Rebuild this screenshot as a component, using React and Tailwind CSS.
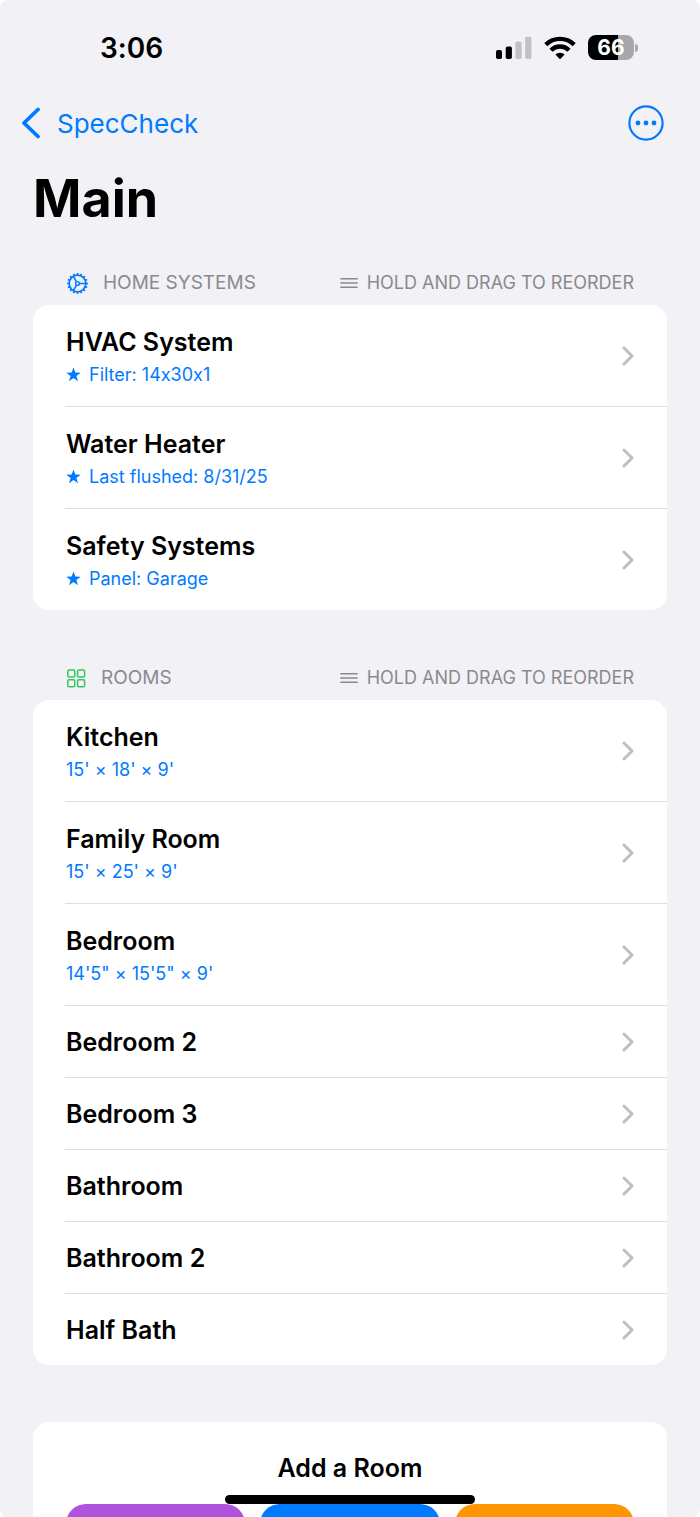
const systems = [
  { name: 'HVAC System', detail: 'Filter: 14x30x1' },
  { name: 'Water Heater', detail: 'Last flushed: 8/31/25' },
  { name: 'Safety Systems', detail: 'Panel: Garage' },
];

const rooms = [
  { name: 'Kitchen', detail: "15' × 18' × 9'" },
  { name: 'Family Room', detail: "15' × 25' × 9'" },
  { name: 'Bedroom', detail: `14'5" × 15'5" × 9'` },
  { name: 'Bedroom 2' },
  { name: 'Bedroom 3' },
  { name: 'Bathroom' },
  { name: 'Bathroom 2' },
  { name: 'Half Bath' },
];

const gearTeeth = Array.from({ length: 16 }, (_, i) => i * 22.5);

const SignalIcon = () => (
  <svg width="36" height="24" viewBox="0 0 36 24" aria-hidden="true">
    <rect x="0" y="14" width="6" height="9" rx="1.8" />
    <rect x="9.7" y="10.5" width="6.2" height="12.5" rx="1.8" />
    <rect x="19.4" y="5.5" width="6.2" height="17.5" rx="1.8" fill="#c1c0c5" />
    <rect x="29.2" y="0.7" width="6.2" height="22.3" rx="1.8" fill="#c1c0c5" />
  </svg>
);

const WifiIcon = () => (
  <svg width="32" height="24" viewBox="0 0 32 24" fill="none" stroke="#000" strokeWidth="4.4" aria-hidden="true">
    <path d="M1.8 8.6 A20.4 20.4 0 0 1 30.2 8.6" />
    <path d="M7 14.2 A12.8 12.8 0 0 1 25 14.2" />
    <path d="M11.4 18.5 A6.6 6.6 0 0 1 20.6 18.5 L16.6 22.7 Q16 23.2 15.4 22.7 Z" fill="#000" stroke="none" />
  </svg>
);

const Battery = () => (
  <div className="flex items-center gap-px">
    <div className="flex h-[25px] w-[46px] items-center justify-center rounded-[8px] bg-[linear-gradient(to_right,#000_66%,#a8a7ac_66%)] text-[21px] leading-none font-bold text-white">
      66
    </div>
    <div className="h-[8px] w-[3px] rounded-r-full bg-[#a8a7ac]" />
  </div>
);

const GearIcon = () => (
  <svg width="21" height="21" viewBox="0 0 21 21" fill="none" stroke="#007aff" aria-hidden="true">
    <circle cx="10.5" cy="10.5" r="8.3" strokeWidth="1.7" />
    <g strokeWidth="1.8">
      {gearTeeth.map((angle) => (
        <path key={angle} d="M18.6 10.5 H20.9" transform={`rotate(${angle} 10.5 10.5)`} />
      ))}
    </g>
    <circle cx="10.5" cy="10.5" r="1.9" strokeWidth="1.4" />
    <path d="M12.4 10.5 H18.4 M9.5 8.9 L6.5 3.7 M9.5 12.1 L6.5 17.3" strokeWidth="1.6" />
  </svg>
);

const GridIcon = () => (
  <svg width="19" height="19" viewBox="0 0 19 19" fill="none" stroke="#34c759" strokeWidth="1.5" aria-hidden="true">
    <rect x="0.8" y="1" width="7" height="7" rx="1.3" />
    <rect x="10.6" y="1" width="7" height="7" rx="1.3" />
    <rect x="0.8" y="10.8" width="7" height="7" rx="1.3" />
    <rect x="10.6" y="10.8" width="7" height="7" rx="1.3" />
  </svg>
);

const LinesIcon = () => (
  <svg width="18" height="12" viewBox="0 0 18 12" stroke="#8a8a8e" strokeWidth="1.4" strokeLinecap="round" aria-hidden="true">
    <path d="M0.8 1.8 H17.2 M0.8 6 H17.2 M0.8 10.2 H17.2" />
  </svg>
);

const StarIcon = () => (
  <svg width="15" height="15" viewBox="0 0 15 15" fill="#007aff" aria-hidden="true">
    <path d="M7.5 0.5 L9.3 5.5 L14.7 5.7 L10.4 9 L12 14.2 L7.5 11.1 L3 14.2 L4.6 9 L0.3 5.7 L5.7 5.5 Z" />
  </svg>
);

const Chevron = () => (
  <svg width="12" height="20" viewBox="0 0 12 20" fill="none" stroke="#bfbfc1" strokeWidth="3" strokeLinecap="round" strokeLinejoin="round" aria-hidden="true">
    <path d="M2 2 L10 10 L2 18" />
  </svg>
);

const SectionHeader = ({ icon, title }) => (
  <div className="flex h-[44px] items-center justify-between pr-[33px] pl-[34px] leading-7 text-[#8a8a8e]">
    <h2 className="flex items-center gap-[15px] text-[19px]">
      {icon}
      {title}
    </h2>
    <span className="flex items-center gap-[9px] text-[18px]">
      <LinesIcon />
      HOLD AND DRAG TO REORDER
    </span>
  </div>
);

const Row = ({ name, detail, starred }) => (
  <li className="group pl-8">
    <a
      href="#"
      className={`flex items-center justify-between border-b border-[#dededf] pr-[33px] pl-px group-last:border-b-0 ${
        detail ? 'h-[102px] group-last:h-[101px]' : 'h-[72px] group-last:h-[71px]'
      }`}
    >
      <span className={detail ? 'flex flex-col gap-[5px] pt-px' : 'flex flex-col'}>
        <span className="text-[25px] leading-8 font-semibold text-black">{name}</span>
        {detail && (
          <span className="flex items-center gap-2 text-[18px] leading-6 text-[#007aff]">
            {starred && <StarIcon />}
            {detail}
          </span>
        )}
      </span>
      <Chevron />
    </a>
  </li>
);

const List = ({ items, starred }) => (
  <ul className="rounded-[16px] bg-white">
    {items.map((item) => (
      <Row key={item.name} {...item} starred={starred} />
    ))}
  </ul>
);

export default function App() {
  return (
    // calt off, otherwise Inter turns the x in 14x30x1 into a multiplication sign
    <div className="h-screen overflow-hidden bg-white font-['Inter',sans-serif] [font-feature-settings:'calt'_0]">
      <div className="relative flex h-full flex-col overflow-hidden rounded-[8px] bg-[#f2f1f6]">
        <header>
          <div className="flex h-[95px] items-center justify-between pr-[62px] pl-[100px]">
            <span className="text-[28px] font-semibold">3:06</span>
            <div className="flex items-center gap-3">
              <SignalIcon />
              <WifiIcon />
              <Battery />
            </div>
          </div>
          <nav className="flex h-14 items-center justify-between pr-9 pl-[21px]">
            <a href="#" className="flex items-center gap-[15px] text-[26px] text-[#007aff]">
              <svg width="21" height="32" viewBox="0 0 21 32" fill="none" stroke="#007aff" strokeWidth="3.8" strokeLinecap="round" strokeLinejoin="round" aria-hidden="true">
                <path d="M17 2.5 L3 16 L17 29.5" />
              </svg>
              SpecCheck
            </a>
            <button type="button" aria-label="More">
              <svg width="36" height="36" viewBox="0 0 36 36" fill="#007aff" aria-hidden="true">
                <circle cx="18" cy="18" r="16.6" fill="none" stroke="#007aff" strokeWidth="2.2" />
                <circle cx="10" cy="18" r="2.4" />
                <circle cx="18" cy="18" r="2.4" />
                <circle cx="26" cy="18" r="2.4" />
              </svg>
            </button>
          </nav>
        </header>

        <main className="flex flex-col px-[33px]">
          <h1 className="mt-4 text-[52px] leading-[64px] font-bold">Main</h1>

          <section className="mt-[30px]">
            <SectionHeader icon={<GearIcon />} title="HOME SYSTEMS" />
            <List items={systems} starred />
          </section>

          <section className="mt-[46px]">
            <SectionHeader icon={<GridIcon />} title="ROOMS" />
            <List items={rooms} />
          </section>

          <section className="mt-[57px] rounded-t-[16px] bg-white px-[33px] pt-[30px] pb-8">
            <h2 className="text-center text-[25px] leading-8 font-semibold">Add a Room</h2>
            <div className="mt-5 grid grid-cols-3 gap-[15px]">
              <button type="button" aria-label="Add bedroom" className="h-[90px] rounded-[20px] bg-[#af52de]" />
              <button type="button" aria-label="Add bathroom" className="h-[90px] rounded-[20px] bg-[#007aff]" />
              <button type="button" aria-label="Add other room" className="h-[90px] rounded-[20px] bg-[#ff9500]" />
            </div>
          </section>
        </main>

        {/* home indicator floats over the scrolled content */}
        <div className="absolute bottom-[13px] left-1/2 h-[9px] w-[250px] -translate-x-1/2 rounded-full bg-black" />
      </div>
    </div>
  );
}
